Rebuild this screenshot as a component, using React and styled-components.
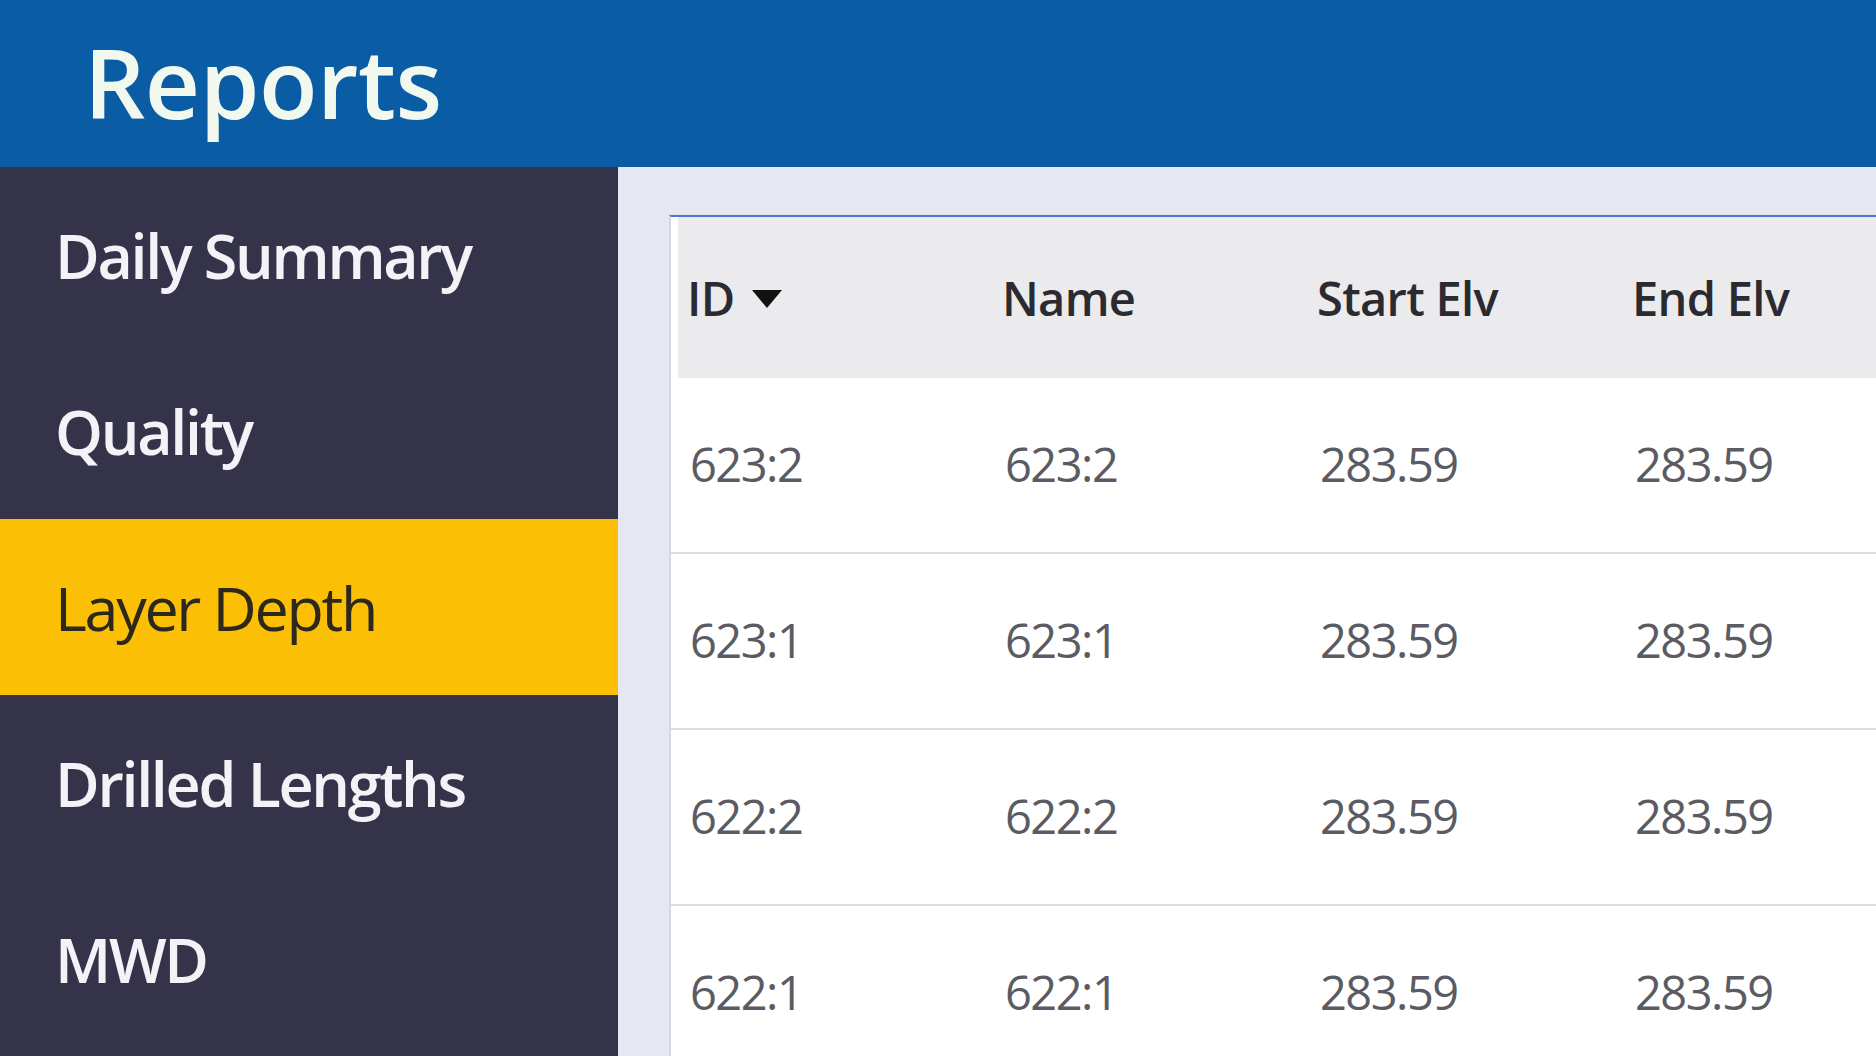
import React from 'react';
import styled, { createGlobalStyle } from 'styled-components';

const GlobalStyle = createGlobalStyle`
  html, body {
    margin: 0;
    padding: 0;
    background: #e7e7f1;
    font-family: 'Open Sans', 'Noto Sans', sans-serif;
  }
`;

const Page = styled.div`
  width: 1876px;
  height: 1056px;
  display: flex;
  flex-direction: column;
  overflow: hidden;
`;

const TopBar = styled.header`
  height: 167px;
  flex-shrink: 0;
  background: #0a5ca5;
  display: flex;
  align-items: center;
  padding-left: 84px;
  box-sizing: border-box;
`;

const Title = styled.h1`
  margin: 0 0 4px;
  font-size: 96px;
  font-weight: 600;
  letter-spacing: -0.5px;
  color: #f1f8ee;
`;

const Body = styled.div`
  flex: 1;
  display: flex;
  min-height: 0;
`;

const Sidebar = styled.nav`
  width: 618px;
  flex-shrink: 0;
  background: #35334a;
  display: flex;
  flex-direction: column;
`;

const NavItem = styled.div`
  height: 176px;
  flex-shrink: 0;
  display: flex;
  align-items: center;
  padding-left: 55px;
  box-sizing: border-box;
  font-size: 61px;
  font-weight: ${p => (p.active ? 500 : 600)};
  letter-spacing: -2.3px;
  color: ${p => (p.active ? '#2c281c' : '#f2f2f7')};
  background: ${p => (p.active ? '#fbbf06' : 'transparent')};
`;

const Main = styled.main`
  flex: 1;
  padding: 48px 0 0 51px;
  min-width: 0;
  overflow: hidden;
`;

const Card = styled.div`
  background: #ffffff;
  border-top: 2px solid #4b79c6;
  border-left: 2px solid #d3d7e4;
  height: 100%;
  box-sizing: border-box;
`;

const HeadRow = styled.div`
  display: grid;
  grid-template-columns: repeat(4, 315px);
  height: 161px;
  align-items: center;
  margin-left: 7px;
  padding-left: 9px;
  background: #ebebee;
`;

const HeadCell = styled.div`
  display: flex;
  align-items: center;
  gap: 18px;
  font-size: 47px;
  font-weight: 600;
  letter-spacing: -0.7px;
  color: #2a2a30;
`;

const SortArrow = styled.svg`
  width: 30px;
  height: 18px;
  margin-top: 2px;
`;

const Row = styled.div`
  display: grid;
  grid-template-columns: repeat(4, 315px);
  height: 174px;
  align-items: center;
  padding-left: 19px;
  border-bottom: 2px solid #dedee2;
`;

const Cell = styled.div`
  font-size: 47px;
  font-weight: 400;
  letter-spacing: -1.5px;
  color: #5b5b63;
  padding-bottom: 3px;
`;

const navItems = ['Daily Summary', 'Quality', 'Layer Depth', 'Drilled Lengths', 'MWD'];

const rows = [
  { id: '623:2', name: '623:2', start: '283.59', end: '283.59' },
  { id: '623:1', name: '623:1', start: '283.59', end: '283.59' },
  { id: '622:2', name: '622:2', start: '283.59', end: '283.59' },
  { id: '622:1', name: '622:1', start: '283.59', end: '283.59' },
];

const App = () => {
  return (
    <>
      <GlobalStyle />
      <Page>
        <TopBar>
          <Title>Reports</Title>
        </TopBar>
        <Body>
          <Sidebar>
            {navItems.map(item => (
              <NavItem key={item} active={item === 'Layer Depth'}>
                {item}
              </NavItem>
            ))}
          </Sidebar>
          <Main>
            <Card>
              <HeadRow>
                <HeadCell>
                  ID
                  <SortArrow viewBox="0 0 30 18">
                    <path d="M0 0 L30 0 L15 18 Z" fill="#111" />
                  </SortArrow>
                </HeadCell>
                <HeadCell>Name</HeadCell>
                <HeadCell>Start Elv</HeadCell>
                <HeadCell>End Elv</HeadCell>
              </HeadRow>
              {rows.map(r => (
                <Row key={r.id}>
                  <Cell>{r.id}</Cell>
                  <Cell>{r.name}</Cell>
                  <Cell>{r.start}</Cell>
                  <Cell>{r.end}</Cell>
                </Row>
              ))}
            </Card>
          </Main>
        </Body>
      </Page>
    </>
  );
};

export default App;
